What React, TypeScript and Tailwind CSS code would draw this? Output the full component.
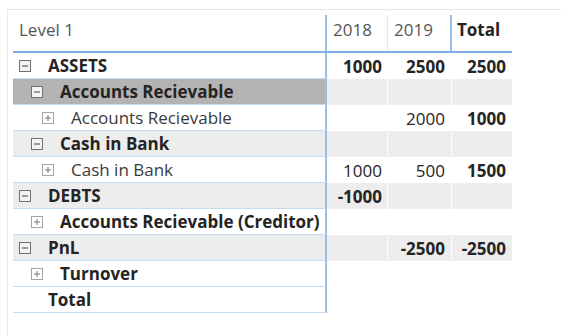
import React from "react";

type Row = {
  label: string;
  level: 1 | 2 | 3;
  icon?: "minus" | "plus";
  bold: boolean;
  band: "none" | "gray" | "selected";
  v2018?: string;
  v2019?: string;
  total?: string;
  boldValues?: boolean;
};

const rows: Row[] = [
  { label: "ASSETS", level: 1, icon: "minus", bold: true, band: "none", v2018: "1000", v2019: "2500", total: "2500", boldValues: true },
  { label: "Accounts Recievable", level: 2, icon: "minus", bold: true, band: "selected" },
  { label: "Accounts Recievable", level: 3, icon: "plus", bold: false, band: "none", v2019: "2000", total: "1000" },
  { label: "Cash in Bank", level: 2, icon: "minus", bold: true, band: "gray" },
  { label: "Cash in Bank", level: 3, icon: "plus", bold: false, band: "none", v2018: "1000", v2019: "500", total: "1500" },
  { label: "DEBTS", level: 1, icon: "minus", bold: true, band: "gray", v2018: "-1000", boldValues: true },
  { label: "Accounts Recievable (Creditor)", level: 2, icon: "plus", bold: true, band: "none" },
  { label: "PnL", level: 1, icon: "minus", bold: true, band: "gray", v2019: "-2500", total: "-2500", boldValues: true },
  { label: "Turnover", level: 2, icon: "plus", bold: true, band: "none" },
  { label: "Total", level: 1, bold: true, band: "none" },
];

const indent = { 1: "pl-[6px]", 2: "pl-[18px]", 3: "pl-[29px]" };

function ToggleBox({ kind }: { kind: "minus" | "plus" }) {
  if (kind === "minus") {
    return (
      <svg width="12" height="12" viewBox="0 0 12 12" className="shrink-0">
        <rect x="0.5" y="0.5" width="11" height="11" fill="#f3f3f3" stroke="#707070" />
        <line x1="3" y1="6" x2="9" y2="6" stroke="#444" strokeWidth="1" />
      </svg>
    );
  }
  return (
    <svg width="12" height="12" viewBox="0 0 12 12" className="shrink-0">
      <rect x="0.5" y="0.5" width="11" height="11" fill="#fff" stroke="#a6a6a6" />
      <line x1="3" y1="6" x2="9" y2="6" stroke="#777" strokeWidth="1" />
      <line x1="6" y1="3" x2="6" y2="9" stroke="#777" strokeWidth="1" />
    </svg>
  );
}

export default function App() {
  return (
    <div className="w-[561px] h-[336px] bg-white pt-[9px] pl-[7px] overflow-hidden font-['Open_Sans','Noto_Sans',sans-serif] text-[17px] leading-[24px] text-[#252423]">
      <div className="h-full border-t border-l border-[#e8e8e8] pt-[5px] pl-[5px]">
        <div className="flex h-[38px] border-b-2 border-[#7fb0e3] w-[499px]">
          <div className="w-[314px] border-r-2 border-[#93c0ec] pl-[6px] pt-[3px] text-[#555]">Level 1</div>
          <div className="w-[61px] border-r border-[#dde9f6] pl-[6px] pt-[3px] text-[#555]">2018</div>
          <div className="w-[64px] border-r-2 border-[#93c0ec] pl-[6px] pt-[3px] text-[#555]">2019</div>
          <div className="w-[60px] pl-[5px] pt-[3px] font-bold">Total</div>
        </div>
        {rows.map((r, i) => {
          const valBg = r.band === "none" ? "bg-white" : "bg-[#ededed]";
          const labelBg = r.band === "selected" ? "bg-[#b3b3b3]" : valBg;
          const vw = r.boldValues ? "font-bold" : "font-normal";
          return (
            <div key={i} className="flex h-[26px] w-[499px]">
              <div
                className={`w-[314px] flex items-center gap-[17px] pt-[1px] border-r-2 border-[#93c0ec] border-b border-b-[#c6dcf1] ${labelBg} ${indent[r.level]} ${r.bold ? "font-bold" : "text-[#3a3a3a]"} ${r.icon ? "" : "pl-[35px]"}`}
              >
                {r.icon && <ToggleBox kind={r.icon} />}
                <span className="whitespace-nowrap">{r.label}</span>
              </div>
              <div className={`w-[61px] flex items-center justify-end pt-[1px] pr-[5px] border-r border-white ${valBg} ${vw}`}>{r.v2018}</div>
              <div className={`w-[64px] flex items-center justify-end pt-[1px] pr-[6px] border-r border-white ${valBg} ${vw}`}>{r.v2019}</div>
              <div className={`w-[60px] flex items-center justify-end pt-[1px] pr-[6px] font-bold ${valBg}`}>{r.total}</div>
            </div>
          );
        })}
      </div>
    </div>
  );
}
